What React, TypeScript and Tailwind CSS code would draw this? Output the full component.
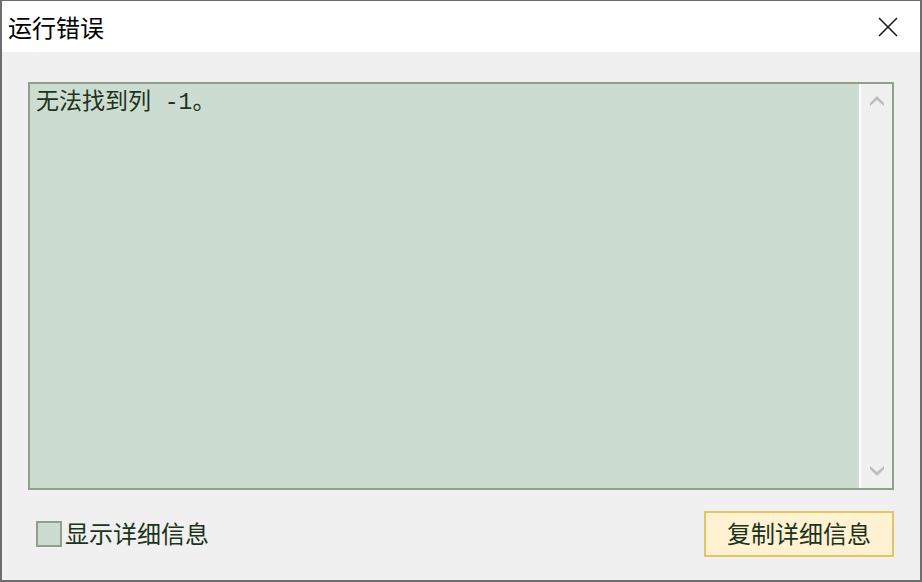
const cjk = "font-['SimSun','Noto_Sans_CJK_SC',sans-serif]";

export default function App() {
  return (
    <div className={`flex h-[582px] w-[922px] flex-col border-t border-b-2 border-l-2 border-r-2 border-[#6e6e6e] bg-[#f0f0f0] ${cjk}`}>
      <div className="flex h-[51px] items-center justify-between bg-white pl-[6px] pr-[22px]">
        <span className="text-[24px] leading-none text-black">运行错误</span>
        <svg width="20" height="20" viewBox="0 0 20 20" className="text-[#1a1a1a]">
          <path d="M1 1L19 19M19 1L1 19" stroke="currentColor" strokeWidth="1.6" fill="none" />
        </svg>
      </div>
      <div className="flex flex-1 flex-col px-[26px] pt-[30px]">
        <div className="flex h-[408px] border-2 border-[#8fa08b] bg-[#cddcd0]">
          <div className="flex-1 px-[6px] pt-[1px] text-[23px] leading-[28px] text-[#1c3320]">
            无法找到列<span className="font-['Liberation_Mono',monospace]"> -1</span>。
          </div>
          <div className="flex w-[33px] flex-col items-center justify-between border-l-2 border-white bg-[#f0f0f0] py-[12px]">
            <svg width="14" height="10" viewBox="0 0 14 10" fill="#bdbdbd">
              <path d="M7 0L14 7L14 10L7 4L0 10L0 7Z" />
            </svg>
            <svg width="14" height="10" viewBox="0 0 14 10" fill="#bdbdbd">
              <path d="M7 10L14 3L14 0L7 6L0 0L0 3Z" />
            </svg>
          </div>
        </div>
        <div className="mt-[21px] flex items-center justify-between pl-[8px]">
          <label className="flex items-center gap-[3px] text-[24px] leading-none text-[#1c3320]">
            <span className="h-[26px] w-[26px] border-2 border-[#8fa08b] bg-[#cddcd0]" />
            <span className="-mt-[3px]">显示详细信息</span>
          </label>
          <button className="h-[46px] w-[190px] border-2 border-[#e6c464] bg-[#fff2d3] pb-[3px] text-[24px] leading-none text-[#1c3320]">
            复制详细信息
          </button>
        </div>
      </div>
    </div>
  );
}
